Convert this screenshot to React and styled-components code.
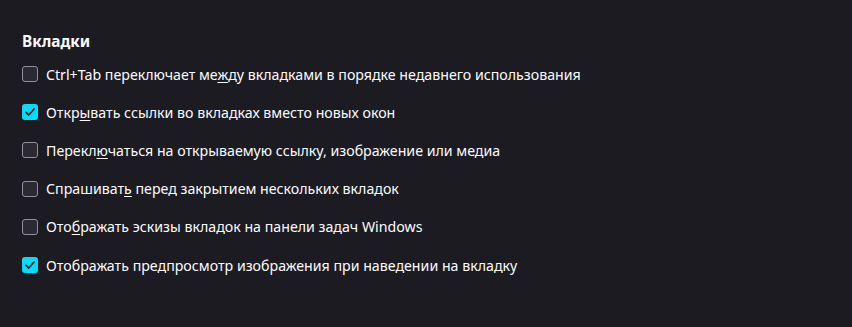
import React from "react";
import styled, { createGlobalStyle } from "styled-components";

const Global = createGlobalStyle`
  html, body { margin: 0; padding: 0; background: #1c1b22; }
  body { font-family: "Segoe UI", "Noto Sans", "Open Sans", sans-serif; color: #fbfbfe; }
`;

const Page = styled.div`
  width: 852px;
  height: 327px;
  box-sizing: border-box;
  padding: 30px 22px 0;
  background: #1c1b22;
`;

const Heading = styled.h2`
  margin: 0 0 1px;
  font-size: 15.4px;
  font-weight: 700;
  line-height: 24px;
  color: #fbfbfe;
`;

const List = styled.div`
  display: flex;
  flex-direction: column;
`;

const Row = styled.label`
  display: flex;
  align-items: center;
  gap: 8px;
  height: 38.2px;
  font-size: 14.2px;
  color: #fbfbfe;
`;

const Box = styled.span`
  width: 16px;
  height: 16px;
  box-sizing: border-box;
  border-radius: 3px;
  flex: none;
  display: flex;
  align-items: center;
  justify-content: center;
  background: ${(p) => (p.$checked ? "#00ddff" : "#2b2a33")};
  border: ${(p) => (p.$checked ? "none" : "1px solid #8f8f9d")};
`;

const Key = styled.span`
  text-decoration: underline;
  text-underline-offset: 2px;
`;

const Check = () => (
  <svg width="12" height="12" viewBox="0 0 12 12">
    <path d="M2 6.3 L4.8 9 L10 3" fill="none" stroke="#1c1b22" strokeWidth="1.8" strokeLinecap="round" strokeLinejoin="round" />
  </svg>
);

const items = [
  { pre: "Ctrl+Tab переключает ме", key: "ж", post: "ду вкладками в порядке недавнего использования", checked: false },
  { pre: "Откр", key: "ы", post: "вать ссылки во вкладках вместо новых окон", checked: true },
  { pre: "Перекл", key: "ю", post: "чаться на открываемую ссылку, изображение или медиа", checked: false },
  { pre: "Спрашиват", key: "ь", post: " перед закрытием нескольких вкладок", checked: false },
  { pre: "Ото", key: "б", post: "ражать эскизы вкладок на панели задач Windows", checked: false },
  { pre: "Отображать предпросмотр изображения при наведении на вкладку", key: "", post: "", checked: true },
];

export default function App() {
  return (
    <>
      <Global />
      <Page>
        <Heading>Вкладки</Heading>
        <List>
          {items.map((it, i) => (
            <Row key={i}>
              <Box $checked={it.checked}>{it.checked && <Check />}</Box>
              <span>
                {it.pre}
                {it.key && <Key>{it.key}</Key>}
                {it.post}
              </span>
            </Row>
          ))}
        </List>
      </Page>
    </>
  );
}
